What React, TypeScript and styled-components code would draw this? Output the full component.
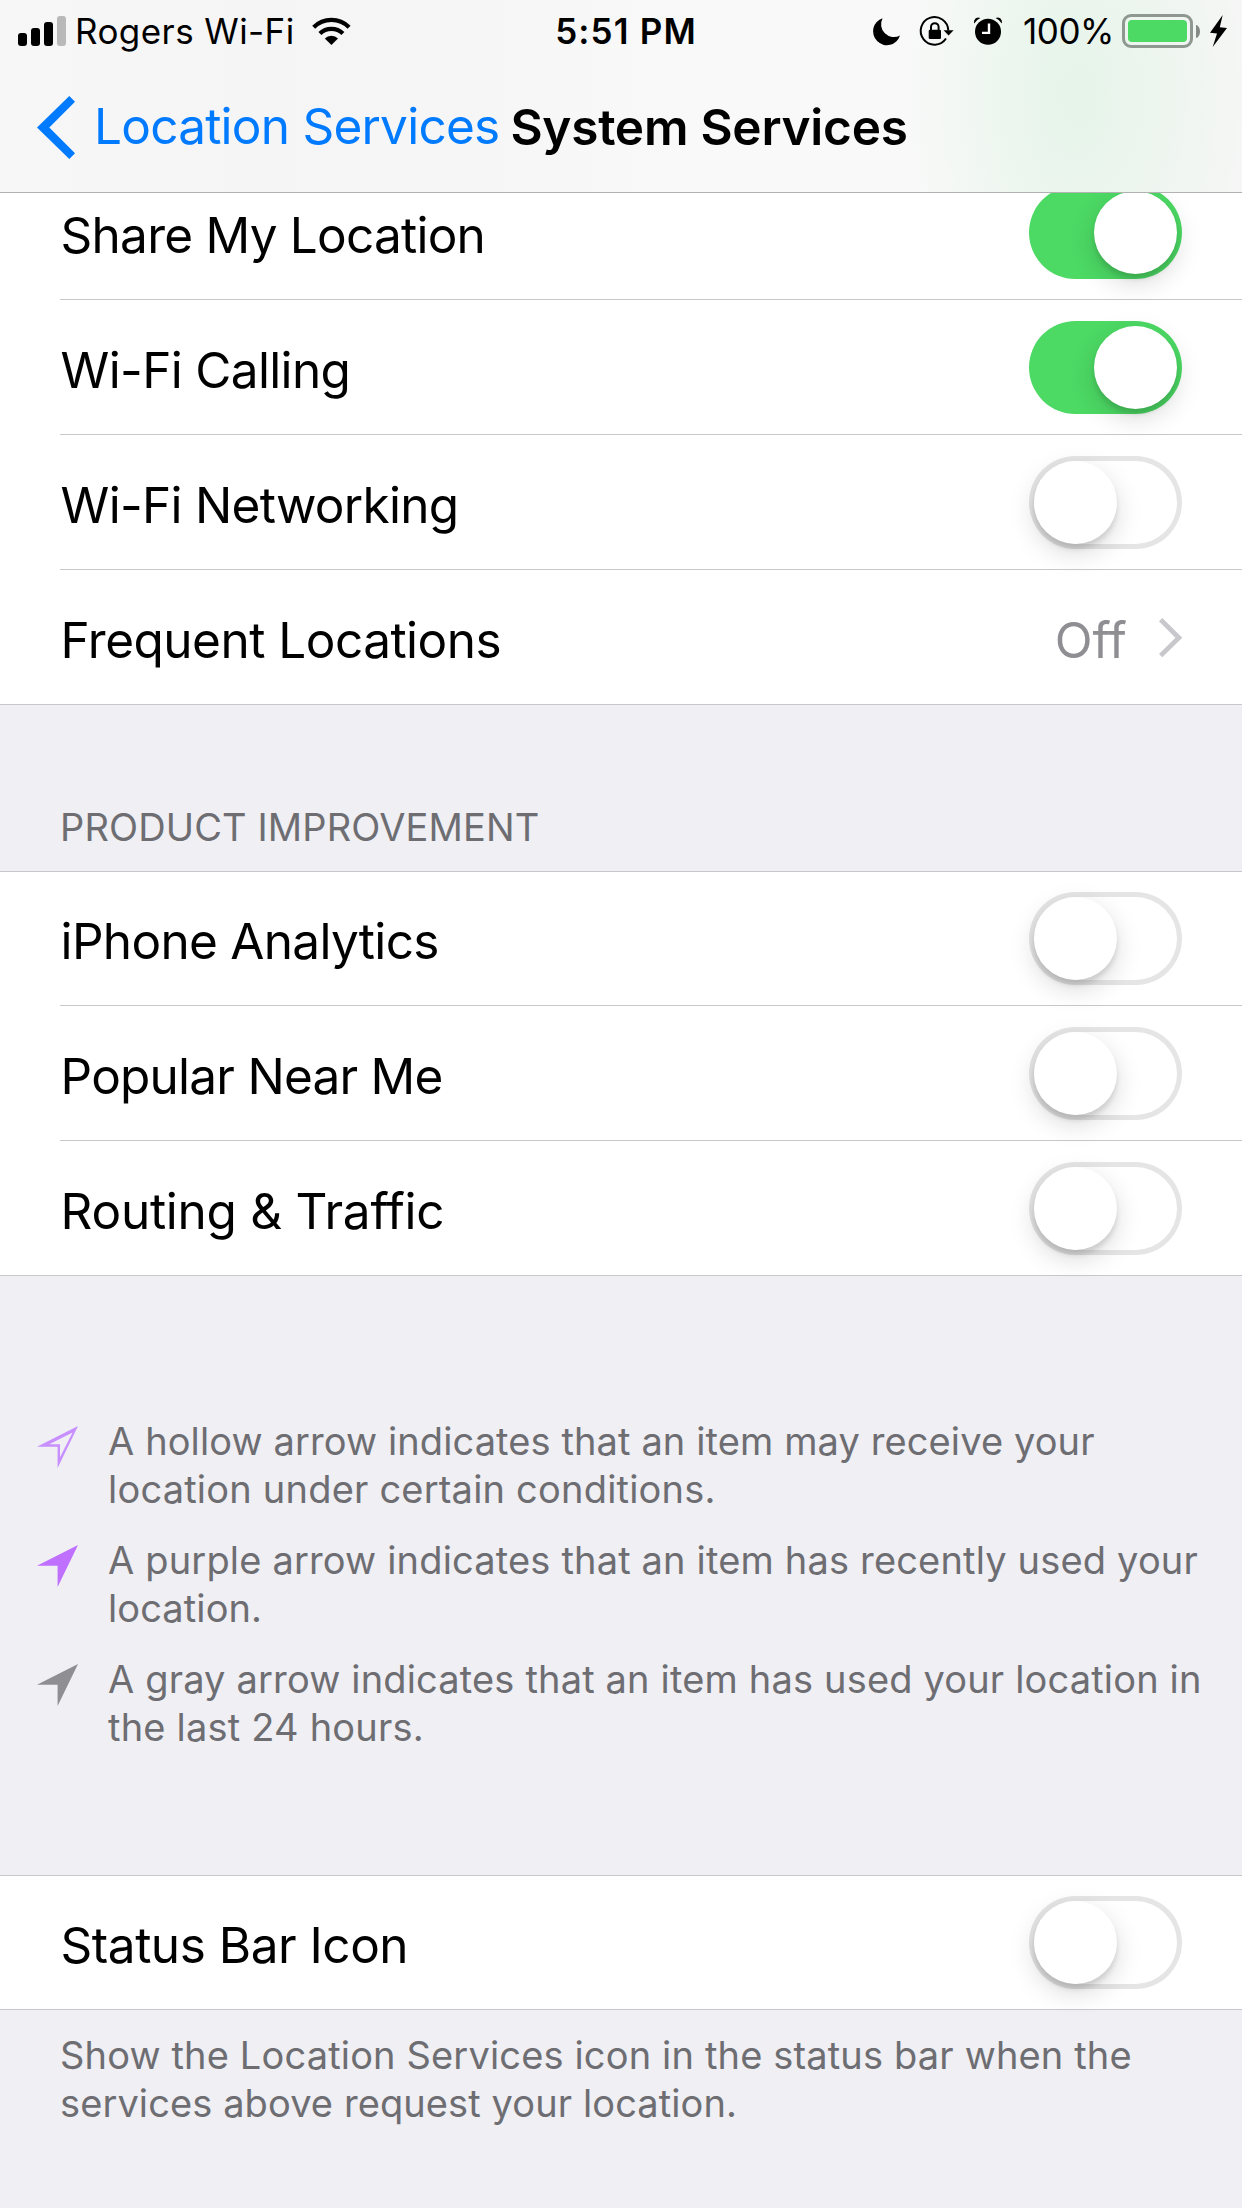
import React from "react";
import styled, { createGlobalStyle, css } from "styled-components";

const GlobalStyle = createGlobalStyle`
  html, body { margin: 0; padding: 0; background: #efeff4; }
  *, *::before, *::after { box-sizing: border-box; }
`;

const Screen = styled.div`
  width: 1242px;
  height: 2208px;
  overflow: hidden;
  display: flex;
  flex-direction: column;
  background: #efeff4;
  color: #000;
  font-family: Inter, "Liberation Sans", sans-serif;
  font-size: 49.5px;
`;

const Header = styled.header`
  position: relative;
  z-index: 1;
  flex: none;
  height: 193px;
  display: flex;
  flex-direction: column;
  border-bottom: 1px solid #b2b2b2;
  background:
    radial-gradient(ellipse 170px 260px at 1076px 95px, rgba(76, 217, 100, 0.085), rgba(76, 217, 100, 0.045) 50%, rgba(76, 217, 100, 0) 100%),
    linear-gradient(90deg, #f7f7f7, #f5f5f5 20%, #f6f6f6 38%, #f9f9f9 55%, #f9f9f9 72%, #f4f7f5 84%, #f5f6f5 100%);
`;

const StatusBar = styled.div`
  height: 62px;
  display: grid;
  grid-template-columns: 1fr auto 1fr;
  align-items: center;
  padding: 0 15px 0 18px;
  font-size: 35px;
  line-height: 62px;
`;

const Text = styled.span<{ $tracking?: number }>`
  letter-spacing: ${(p) => p.$tracking ?? 0}px;
  white-space: nowrap;
`;

const StatusLeft = styled.div`
  display: flex;
  align-items: center;
`;

const StatusRight = styled.div`
  display: flex;
  align-items: center;
  justify-content: flex-end;
`;

const SignalBars = styled.div`
  display: flex;
  align-items: flex-end;
  gap: 4px;
  height: 30px;
  margin-right: 9px;
`;

const Bar = styled.i<{ $height: number; $dim?: boolean }>`
  width: 9px;
  height: ${(p) => p.$height}px;
  border-radius: 3px;
  background: ${(p) => (p.$dim ? "#b9b9b9" : "#000")};
`;

const Icon = styled.svg<{ $right?: number; $left?: number; $top?: number }>`
  flex: none;
  display: block;
  overflow: visible;
  margin-top: ${(p) => p.$top ?? 0}px;
  margin-right: ${(p) => p.$right ?? 0}px;
  margin-left: ${(p) => p.$left ?? 0}px;
`;

const Clock = styled(Text)`
  font-weight: 600;
  padding-left: 7px;
`;

const Battery = styled.div`
  width: 71px;
  height: 34px;
  margin: 0 3px 0 8px;
  padding: 3px;
  border: 3px solid #8f9791;
  border-radius: 9px;
  display: flex;
`;

const Charge = styled.div`
  flex: 1;
  border-radius: 4px;
  background: #4cd964;
`;

const BatteryCap = styled.div`
  width: 4px;
  height: 13px;
  margin-right: 10px;
  border-radius: 0 4px 4px 0 / 0 6.5px 6.5px 0;
  background: #858a86;
`;

const NavBar = styled.nav`
  flex: 1;
  display: flex;
  align-items: center;
  padding-left: 37px;
`;

const BackLabel = styled(Text)`
  color: #007aff;
  margin-left: 19px;
  padding-bottom: 2px;
`;

const Title = styled(Text)`
  font-weight: 600;
  margin-left: 11px;
`;

const Content = styled.main`
  margin-top: -28px;
  display: flex;
  flex-direction: column;
`;

const Group = styled.section`
  background: #fff;
  box-shadow: inset 0 1px 0 #c8c7cc, inset 0 -1px 0 #c8c7cc;
`;

const Row = styled.div`
  height: 135px;
  margin-left: 60px;
  padding-right: 60px;
  display: flex;
  align-items: center;
  border-bottom: 1px solid #c8c7cc;
  &:last-child { border-bottom-color: transparent; }
`;

const RowLabel = styled(Text)`
  flex: 1;
  padding: 6px 0 0 0.6px;
`;

const RowValue = styled(Text)`
  color: #8e8e93;
  padding-top: 6px;
`;

const Track = styled.div<{ $on: boolean }>`
  width: 153px;
  height: 93px;
  padding: 5px;
  margin-top: 1px;
  border-radius: 46.5px;
  display: flex;
  ${(p) =>
    p.$on
      ? css`
          background: #4cd964;
          justify-content: flex-end;
        `
      : css`
          background: #fff;
          box-shadow: inset 0 0 0 5px #e5e5e5;
        `}
`;

const Knob = styled.div`
  width: 83px;
  height: 83px;
  border-radius: 50%;
  background: #fff;
  box-shadow: 0 9px 26px rgba(0, 0, 0, 0.15), 0 5px 5px rgba(0, 0, 0, 0.11);
`;

const SectionHeading = styled.div`
  height: 166px;
  padding: 98px 60px 0;
  font-size: 38px;
  line-height: 48px;
  color: #6d6d72;
`;

const Legend = styled.div`
  height: 599px;
  padding: 141px 36px 0 36.5px;
  display: flex;
  flex-direction: column;
  gap: 23px;
`;

const LegendItem = styled.div`
  display: flex;
  align-items: flex-start;
  gap: 30.5px;
`;

const ArrowIcon = styled.svg`
  flex: none;
  display: block;
  margin-top: 9px;
`;

const Paragraph = styled.div`
  display: flex;
  flex-direction: column;
  font-size: 38px;
  line-height: 48px;
  color: #6d6d72;
`;

const Footnote = styled(Paragraph)`
  padding: 21px 60px 0;
`;

type Line = [text: string, tracking: number];

function Toggle({ on = false }: { on?: boolean }) {
  return (
    <Track $on={on} role="switch" aria-checked={on}>
      <Knob />
    </Track>
  );
}

function ToggleRow({ label, tracking, on }: { label: string; tracking: number; on?: boolean }) {
  return (
    <Row>
      <RowLabel $tracking={tracking}>{label}</RowLabel>
      <Toggle on={on} />
    </Row>
  );
}

function Lines({ lines }: { lines: Line[] }) {
  return (
    <>
      {lines.map(([text, tracking]) => (
        <Text key={text} $tracking={tracking}>
          {text}
        </Text>
      ))}
    </>
  );
}

function Arrow({ color, hollow }: { color: string; hollow?: boolean }) {
  return (
    <ArrowIcon width="41" height="42" viewBox="0 0 41 42">
      <path
        fill={color}
        fillRule="evenodd"
        d={"M0 20.8 L41 0 L20.6 42 L20.6 20.8 Z" + (hollow ? " M12.3 18.3 L23 18.3 L23 31.3 L35.6 6.5 Z" : "")}
      />
    </ArrowIcon>
  );
}

const legend: { color: string; hollow?: boolean; lines: Line[] }[] = [
  {
    color: "#c88fff",
    hollow: true,
    lines: [
      ["A hollow arrow indicates that an item may receive your", 0.11],
      ["location under certain conditions.", 0.206],
    ],
  },
  {
    color: "#bf70ff",
    lines: [
      ["A purple arrow indicates that an item has recently used your", 0.17],
      ["location.", 0.1],
    ],
  },
  {
    color: "#8e8e93",
    lines: [
      ["A gray arrow indicates that an item has used your location in", 0.165],
      ["the last 24 hours.", 0.202],
    ],
  },
];

export default function App() {
  return (
    <Screen>
      <GlobalStyle />
      <Header>
        <StatusBar>
          <StatusLeft>
            <SignalBars>
              <Bar $height={13} />
              <Bar $height={18} />
              <Bar $height={24} />
              <Bar $height={30} $dim />
            </SignalBars>
            <Text $tracking={0.42}>Rogers Wi-Fi</Text>
            <Icon $left={17} width="39" height="27" viewBox="0 0 39 27">
              <g fill="none" stroke="#000" strokeWidth="4.2">
                <path d="M1.7 9.2 A25 25 0 0 1 37.1 9.2" />
                <path d="M7.9 15.6 A16.2 16.2 0 0 1 30.9 15.6" />
              </g>
              <path d="M19.4 27 L12.8 20.4 A9.3 9.3 0 0 1 26 20.4 Z" />
            </Icon>
          </StatusLeft>
          <Clock $tracking={1.154}>5:51 PM</Clock>
          <StatusRight>
            <Icon $right={20} width="27" height="27" viewBox="0 0 27 27">
              <path d="M9.6 0.2 A13.8 13.8 0 1 0 27 17.5 A12.8 12.8 0 0 1 9.6 0.2 Z" />
            </Icon>
            <Icon $right={20} width="34" height="30" viewBox="0 0 34 30">
              <path d="M28.3 14.5 A13.8 13.8 0 1 0 26 22.5" fill="none" stroke="#000" strokeWidth="2" />
              <path d="M23.6 14.2 H33.6 L28.6 19.6 Z" />
              <rect x="8.7" y="13.7" width="12.3" height="9.3" rx="1.2" />
              <path d="M11 14.5 V11 A3.8 3.8 0 0 1 18.6 11 V14.5" fill="none" stroke="#000" strokeWidth="2" />
            </Icon>
            <Icon $right={21} width="28" height="28" viewBox="0 0 28 28">
              <circle cx="14" cy="14.8" r="13" />
              <path d="M0.2 6.6 C-0.8 2.6 2.6 -1 6.4 1 Q2.4 2.8 0.2 6.6 Z" />
              <path d="M27.8 6.6 C28.8 2.6 25.4 -1 21.6 1 Q25.6 2.8 27.8 6.6 Z" />
              <path d="M15 6.5 V15.9 H8" fill="none" stroke="#fff" strokeWidth="2.4" />
            </Icon>
            <Text $tracking={-0.465}>100%</Text>
            <Battery>
              <Charge />
            </Battery>
            <BatteryCap />
            <Icon width="17" height="32" viewBox="0 0 17 32">
              <path d="M12.7 0 L0 17.7 L7 18.4 L2.7 32 L17 13 L9.8 12.3 Z" />
            </Icon>
          </StatusRight>
        </StatusBar>
        <NavBar>
          <Icon width="38" height="63" viewBox="0 0 38 63">
            <path fill="#007aff" d="M32.3 0 L38 5.7 L12.3 31.5 L38 57.3 L32.3 63 L0 31.5 Z" />
          </Icon>
          <BackLabel $tracking={-0.764}>Location Services</BackLabel>
          <Title $tracking={-0.251}>System Services</Title>
        </NavBar>
      </Header>

      <Content>
        <Group>
          <ToggleRow label="Share My Location" tracking={-0.763} on />
          <ToggleRow label="Wi-Fi Calling" tracking={-0.66} on />
          <ToggleRow label="Wi-Fi Networking" tracking={-0.71} />
          <Row>
            <RowLabel $tracking={-0.51}>Frequent Locations</RowLabel>
            <RowValue $tracking={-0.2}>Off</RowValue>
            <Icon $left={32} $top={2} width="23.3" height="39.3" viewBox="0 0 23.3 39.3">
              <path fill="#c7c7cc" d="M3.3 0 L0 3.3 L16.4 19.65 L0 36 L3.3 39.3 L23.3 19.65 Z" />
            </Icon>
          </Row>
        </Group>

        <SectionHeading>
          <Text $tracking={0.13}>PRODUCT IMPROVEMENT</Text>
        </SectionHeading>

        <Group>
          <ToggleRow label="iPhone Analytics" tracking={-0.69} />
          <ToggleRow label="Popular Near Me" tracking={-0.77} />
          <ToggleRow label="Routing & Traffic" tracking={-0.26} />
        </Group>

        <Legend>
          {legend.map((item) => (
            <LegendItem key={item.color}>
              <Arrow color={item.color} hollow={item.hollow} />
              <Paragraph>
                <Lines lines={item.lines} />
              </Paragraph>
            </LegendItem>
          ))}
        </Legend>

        <Group>
          <ToggleRow label="Status Bar Icon" tracking={-0.48} />
        </Group>
        <Footnote>
          <Lines
            lines={[
              ["Show the Location Services icon in the status bar when the", 0.155],
              ["services above request your location.", 0.1],
            ]}
          />
        </Footnote>
      </Content>
    </Screen>
  );
}
